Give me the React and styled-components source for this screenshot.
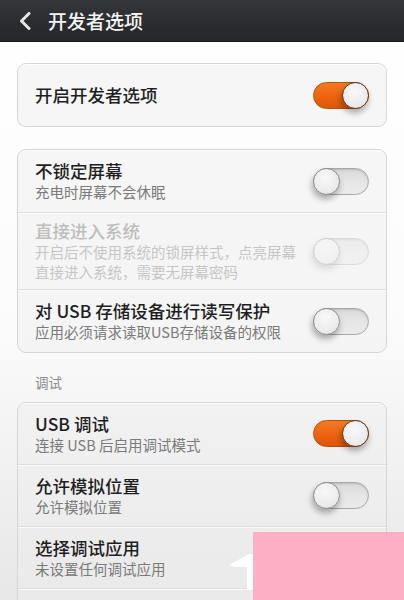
import React from 'react';
import styled, { createGlobalStyle, css } from 'styled-components';

const GlobalStyle = createGlobalStyle`
	html, body {
		margin: 0;
		padding: 0;
	}
	body {
		width: 404px;
		height: 600px;
		overflow: hidden;
		background: linear-gradient(180deg, #ffffff 0%, #fbfbfb 55%, #e7e7e7 100%);
		font-family: 'Noto Sans CJK SC', 'Noto Sans', sans-serif;
	}
`;

const Page = styled.div`
	position: relative;
	height: 600px;
	overflow: hidden;
`;

const Header = styled.header`
	height: 42px;
	display: flex;
	align-items: center;
	gap: 17px;
	padding-left: 19px;
	background: linear-gradient(180deg, #34363a 0%, #2a2c30 60%, #242629 100%);
	border-bottom: 1px solid #1c1d20;
	box-sizing: border-box;
`;

const Title = styled.h1`
	margin: 0;
	font-size: 19px;
	font-weight: 500;
	color: #f4f4f4;
`;

const Content = styled.main`
	padding: 21px 17px 0;
	display: flex;
	flex-direction: column;
`;

const Card = styled.section`
	border: 1px solid #d6d6d6;
	border-radius: 9px;
	background: rgba(238, 238, 238, 0.45);
	box-shadow: inset 0 1px 0 #ffffff;
	margin-bottom: ${(p) => p.$gap || 0}px;
	overflow: hidden;
`;

const Row = styled.div`
	height: ${(p) => p.$h}px;
	display: flex;
	align-items: center;
	justify-content: space-between;
	padding: 0 17px;
	box-sizing: border-box;
	& + & {
		border-top: 1px solid #dedede;
		box-shadow: inset 0 1px 0 #fafafa;
	}
`;

const Texts = styled.div`
	display: flex;
	flex-direction: column;
`;

const RowTitle = styled.div`
	font-size: 17.5px;
	line-height: 22px;
	font-weight: 500;
	color: ${(p) => (p.$disabled ? '#bdbdbd' : '#1e1e1e')};
`;

const RowSub = styled.div`
	font-size: 14.5px;
	line-height: 20px;
	color: ${(p) => (p.$disabled ? '#c6c6c6' : '#7a7a7a')};
`;

const SectionLabel = styled.div`
	font-size: 13.5px;
	line-height: 20px;
	color: #8a8a8a;
	padding: 19px 0 10px 18px;
`;

const Track = styled.div`
	position: relative;
	flex: none;
	width: 56px;
	height: 27px;
	border-radius: 14px;
	box-sizing: border-box;
	${(p) =>
		p.$on
			? css`
					background: linear-gradient(180deg, #f47a22 0%, #ec6310 55%, #dd560a 100%);
					border: 1px solid #b2500e;
			  `
			: css`
					background: linear-gradient(180deg, #d9d9d9 0%, #e6e6e6 50%, #ebebeb 100%);
					border: 1px solid #a9a9a9;
					box-shadow: inset 0 1px 2px rgba(0, 0, 0, 0.15);
			  `}
	opacity: ${(p) => (p.$disabled ? 0.35 : 1)};
`;

const Knob = styled.div`
	position: absolute;
	top: -1px;
	${(p) => (p.$on ? 'right: -1px;' : 'left: -1px;')}
	width: 27px;
	height: 27px;
	border-radius: 50%;
	box-sizing: border-box;
	background: radial-gradient(circle at 45% 35%, #f8f8f8 0%, #ececec 60%, #dcdcdc 100%);
	border: 1px solid ${(p) => (p.$on ? '#5e3216' : '#8d8d8d')};
	box-shadow: -1px 4px 6px rgba(0, 0, 0, 0.32);
`;

const Watermark = styled.div`
	position: absolute;
	left: 253px;
	top: 532px;
	width: 151px;
	height: 68px;
	background: #fdb0c5;
`;

const WatermarkMark = styled.svg`
	position: absolute;
	left: 229px;
	top: 553px;
`;

function Toggle({ on, disabled }) {
	return (
		<Track $on={on} $disabled={disabled}>
			<Knob $on={on} />
		</Track>
	);
}

function Chevron() {
	return (
		<svg width="12" height="18" viewBox="0 0 12 18">
			<path d="M10 1.5 L2.5 9 L10 16.5" fill="none" stroke="#e6e6e6" strokeWidth="3" strokeLinecap="round" strokeLinejoin="round" />
		</svg>
	);
}

function Setting({ h, title, sub, on, disabled }) {
	return (
		<Row $h={h}>
			<Texts>
				{title && <RowTitle $disabled={disabled}>{title}</RowTitle>}
				{sub && sub.map((line) => (
					<RowSub key={line} $disabled={disabled}>{line}</RowSub>
				))}
			</Texts>
			{on !== undefined && <Toggle on={on} disabled={disabled} />}
		</Row>
	);
}

export default function App() {
	return (
		<Page>
			<GlobalStyle />
			<Header>
				<Chevron />
				<Title>开发者选项</Title>
			</Header>
			<Content>
				<Card $gap={22}>
					<Setting h={62} title="开启开发者选项" on />
				</Card>
				<Card>
					<Setting h={62} title="不锁定屏幕" sub={['充电时屏幕不会休眠']} on={false} />
					<Setting
						h={77}
						title="直接进入系统"
						sub={['开启后不使用系统的锁屏样式，点亮屏幕', '直接进入系统，需要无屏幕密码']}
						on={false}
						disabled
					/>
					<Setting h={63} title="对 USB 存储设备进行读写保护" sub={['应用必须请求读取USB存储设备的权限']} on={false} />
				</Card>
				<SectionLabel>调试</SectionLabel>
				<Card>
					<Setting h={61} title="USB 调试" sub={['连接 USB 后启用调试模式']} on />
					<Setting h={62} title="允许模拟位置" sub={['允许模拟位置']} on={false} />
					<Setting h={62} title="选择调试应用" sub={['未设置任何调试应用']} />
					<Setting h={62} />
				</Card>
			</Content>
			<Watermark />
			<WatermarkMark width="26" height="38" viewBox="0 0 26 38">
				<path d="M0 12 L20 1 L24 1 L24 36 L18 36 L18 14 L6 14 Z" fill="#ffffff" />
			</WatermarkMark>
		</Page>
	);
}
